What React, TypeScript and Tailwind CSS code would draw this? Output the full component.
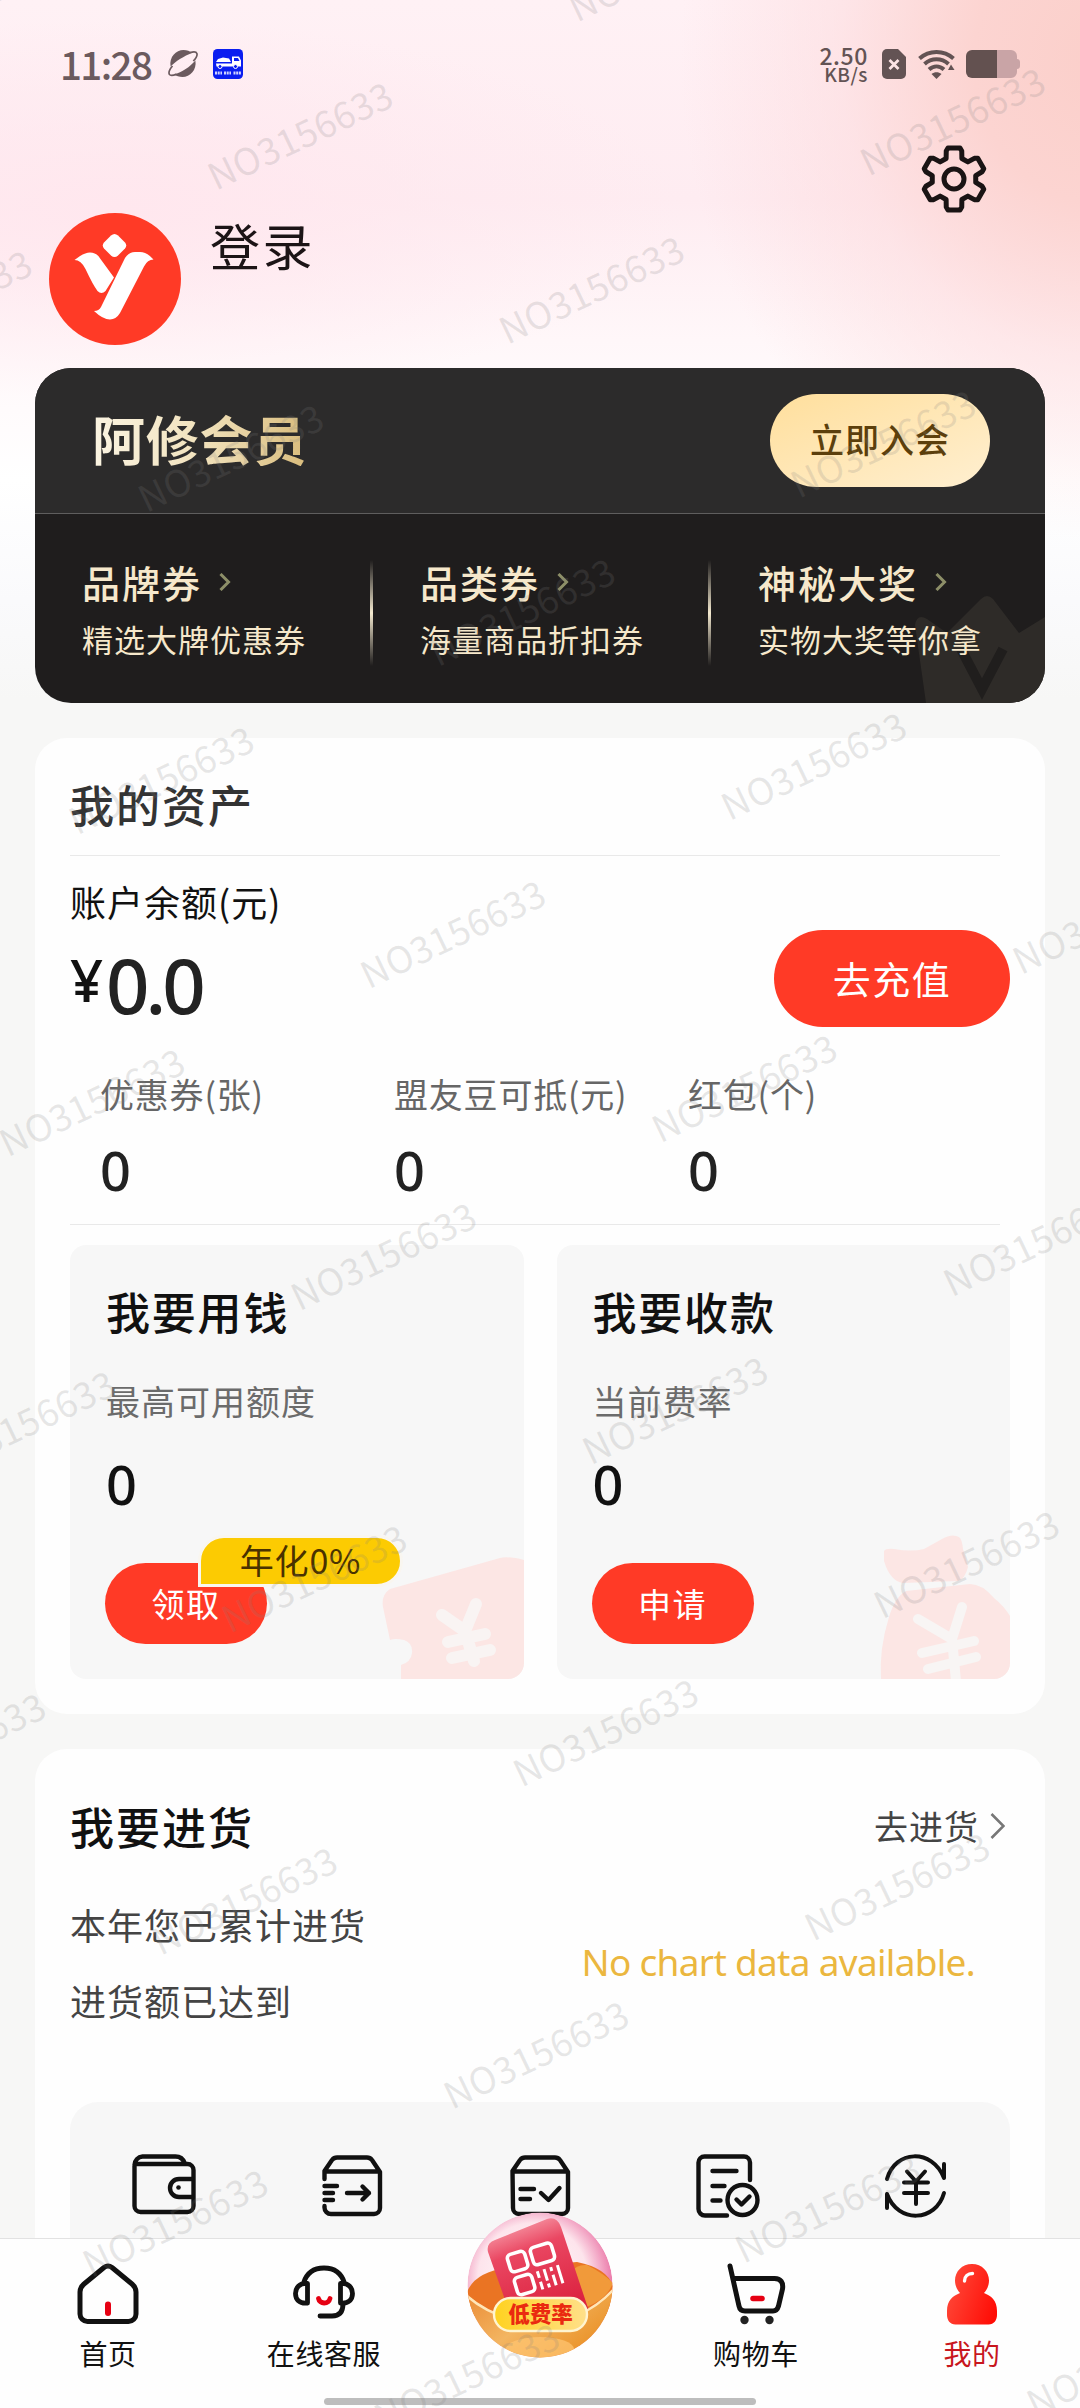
import type { ReactNode } from "react";
import { clsx } from "clsx";

const perks = [
  { title: "品牌券", desc: "精选大牌优惠券" },
  { title: "品类券", desc: "海量商品折扣券" },
  { title: "神秘大奖", desc: "实物大奖等你拿" },
];

const assets = [
  { label: "优惠券(张)", value: "0" },
  { label: "盟友豆可抵(元)", value: "0" },
  { label: "红包(个)", value: "0" },
];

/* ── Status bar ── */

function StatusBar() {
  return (
    <div className="h-[128px] px-[60px] flex items-center justify-between text-[#6b5a5e]">
      <div className="flex items-center h-[30px]">
        <span className="text-[38.5px] leading-[38px] font-medium tracking-[-1.6px] w-[108px] -mt-[3px]">11:28</span>
        <svg width="30" height="30" viewBox="0 0 30 30" fill="currentColor">
          <path d="M2.6 17.500C1 8 8 1 15.500 1c3.600 0 6.400 1.200 8.500 3C16 7 8 12 2.600 17.500z" />
          <path d="M27.400 11.500C29 21 22 28 14.500 28c-3 0-6.500-1-8.500-2.500C14 23 22 18 27.400 11.500z" />
          <path
            d="M22 3.500c3.400-1 6.400-.6 6.900.9.600 1.900-1.100 5.100-3.600 7.600M4.500 17c-3 3.500-4 7-3 8.500 1 1.200 3.500 1 7-.4"
            fill="none"
            stroke="currentColor"
            strokeWidth="1.700"
          />
        </svg>
        <svg className="ml-[15px]" width="30" height="30" viewBox="0 0 30 30">
          <rect width="30" height="30" rx="4.500" fill="#0a1ef0" />
          <path d="M3 14.500h16V7.500h7l2 4v6H3.500zM5 10l5-1.500 6 1 2 3.500H3z" fill="#fff" />
          <path d="M21 9h4l1.500 3H21z" fill="#0a1ef0" />
          <circle cx="7" cy="17.500" r="2" fill="#0a1ef0" stroke="#fff" />
          <circle cx="22.500" cy="17.500" r="2" fill="#0a1ef0" stroke="#fff" />
          <path d="M2 24h7M11 24h7M20.500 24h8" stroke="#cfd4ff" strokeWidth="3" strokeDasharray="2 .7" />
        </svg>
      </div>
      <div className="flex items-center text-[#635354]">
        <div className="text-right font-medium mr-[14px]">
          <div className="text-[23px] leading-[19px] tracking-[0.6px]">2.50</div>
          <div className="text-[19px] leading-[18px] tracking-[0.5px]">KB/s</div>
        </div>
        <svg width="24" height="30" viewBox="0 0 24 30">
          <path d="M5 0h11l8 8v17a5 5 0 0 1-5 5H5a5 5 0 0 1-5-5V5a5 5 0 0 1 5-5z" fill="currentColor" />
          <path d="m7.500 11 9 9m0-9-9 9" stroke="#fde4e6" strokeWidth="2.800" />
        </svg>
        <svg className="ml-[12px]" width="37" height="30" viewBox="0 0 37 30" fill="none" stroke="currentColor" strokeWidth="4">
          <path d="M1.500 9.500C11 .8 26 .8 35.500 9.500" />
          <path d="M6.500 15c7-6.300 17-6.300 24 0" />
          <path d="M11 20.500c4.500-4 10.500-4 15 0" />
          <path d="m13.500 25 5 5 5-5c-3-2.300-7-2.300-10 0z" fill="currentColor" stroke="none" />
          <path d="m30 21 3-5.500 3.500 5.500z" fill="currentColor" stroke="none" />
        </svg>
        <svg className="ml-[11px]" width="54" height="28" viewBox="0 0 54 28">
          <path d="M31 0h14a6 6 0 0 1 6 6v3c1.700 0 3 1 3 3v4c0 2-1.300 3-3 3v3a6 6 0 0 1-6 6H31z" fill="#c9a4a6" />
          <path d="M6 0h25v28H6a6 6 0 0 1-6-6V6a6 6 0 0 1 6-6z" fill="#635150" />
        </svg>
      </div>
    </div>
  );
}

/* Six teeth, each given by [angle offset, radius] pairs. */
const gearPoints = [0, 60, 120, 180, 240, 300]
  .flatMap((base) =>
    [
      [-21, 22],
      [-15.5, 29],
      [-11, 31.5],
      [11, 31.5],
      [15.5, 29],
      [21, 22],
    ].map(([a, r]) => {
      const rad = ((base + a) * Math.PI) / 180;
      return `${(Math.sin(rad) * r).toFixed(2)},${(-Math.cos(rad) * r).toFixed(2)}`;
    }),
  )
  .join(" ");

function GearIcon() {
  return (
    <svg width="68" height="68" viewBox="-34 -34 68 68" fill="none" stroke="#1a1414" strokeWidth="5" strokeLinejoin="round">
      <polygon points={gearPoints} />
      <circle r="10" />
    </svg>
  );
}

function Avatar() {
  return (
    <svg width="132" height="132" viewBox="0 0 132 132">
      <circle cx="66" cy="66" r="66" fill="#ff3a26" />
      <path d="M62 22.500q3.500-3 7 0l7 7q2.500 3 0 6l-7 7q-3.500 3-7 0l-7-7q-2.500-3 0-6z" fill="#fff" />
      <path d="M25.500 47q9-7.500 15.500-7.500 7 0 10.500 6.500L65 64.500 56.500 78q-4 4-8 0Q44 72 36.500 56 32 47 25.500 47z" fill="#fff" />
      <path d="M76 45q4-6 10-6h5q7 0 13.500 7.500-6 0-9.500 7L71 100q-4 6.500-10 6.500-7 0-16-8.500 5 0 7-4z" fill="#fff" />
    </svg>
  );
}

function PerkArrow() {
  return (
    <svg width="12" height="18" viewBox="0 0 12 18" fill="none" stroke="#8d8f68" strokeWidth="3">
      <path d="m1.500 1 8 8-8 8" />
    </svg>
  );
}

/* ── Membership card ── */

function MemberCard() {
  return (
    <section className="mx-[35px] mt-[23px] h-[335px] rounded-[36px] overflow-hidden bg-[#1f1d1d] relative">
      <div className="h-[146px] bg-[#2c2b2b] border-b border-[#5f5e5e] pl-[57px] pr-[55px] flex items-center justify-between">
        <h2 className="-mt-[6px] text-[53px] leading-[56px] font-bold tracking-[0.8px] bg-linear-to-r from-[#fbf4e2] via-[#f1e2bd] to-[#d9bc7c] bg-clip-text text-transparent">
          阿修会员
        </h2>
        <button className="w-[220px] h-[93px] pb-[3px] rounded-full bg-linear-to-br from-[#ffdf9c] to-[#ffefd0] text-[#5c3f0c] text-[34px] leading-[34px] font-medium tracking-[1px]">
          立即入会
        </button>
      </div>
      <svg className="absolute right-0 bottom-0" width="132" height="108" viewBox="0 0 132 108">
        <path d="M13 108 2 30q2-12 12-6l20 14 34-34q6-6 12 0l26 34 26-16v86z" fill="#2e2b28" />
        <path d="m48 54 21 40 21-40" fill="none" stroke="#201e1d" strokeWidth="10" />
      </svg>
      <div className="relative flex pt-[46px]">
        {perks.map((perk, i) => (
          <div key={perk.title} className="w-[338px] shrink-0 h-[106px] flex justify-between">
            <div className="pl-[47px] pt-[2px] text-[#f6e8cb]">
              <div className="flex items-center gap-[17px]">
                <span className="text-[38px] leading-[40px] font-medium tracking-[2px]">{perk.title}</span>
                <PerkArrow />
              </div>
              <div className="mt-[21px] text-[31px] leading-[32px] tracking-[1px] whitespace-nowrap">{perk.desc}</div>
            </div>
            {i < 2 && <div className="w-[3px] bg-linear-to-b from-transparent via-[#f3e9cf] to-transparent" />}
          </div>
        ))}
      </div>
    </section>
  );
}

/* ── Assets ── */

function PillButton({ className, children }: { className?: string; children: ReactNode }) {
  return (
    <button className={clsx("rounded-full bg-[#ff3a26] text-white flex items-center justify-center", className)}>
      {children}
    </button>
  );
}

function TicketArt() {
  return (
    <svg className="absolute right-0 bottom-0" width="142" height="124" viewBox="0 0 142 124" fill="#fce6e4">
      <path d="M8 34 118 3q8-2 24 2v119H19v-14q10-3 11-12 1-10-8-13-9-2-14 0L1 52Q-1 40 8 34z" />
      <path
        d="m60 60 23 16 11-27M83 76l9 30M66 87l37-8M70 103l38-8"
        fill="none"
        stroke="#f9f4f3"
        strokeWidth="12"
        strokeLinecap="round"
      />
    </svg>
  );
}

function MoneyBagArt() {
  return (
    <svg className="absolute right-0 bottom-0" width="132" height="144" viewBox="0 0 132 144" fill="#fce6e4">
      <path d="M6 16q2-3 10-2 18 3 30 0L64 4q10-6 17-2 3 2 4 12l5 18q-3 12-10 14l-55 2Q12 46 6 26z" />
      <path d="M28 56 92 49q12 0 24 14 10 8 16 18v63H3q-2-30 8-62Q17 62 28 56z" />
      <path
        d="m40 84 34 20 10-32M74 104l4 42M44 118l52-12M50 134l48-12"
        fill="none"
        stroke="#f8f5f4"
        strokeWidth="10"
        strokeLinecap="round"
      />
    </svg>
  );
}

function QuotaCard({
  title,
  label,
  action,
  tag,
  art,
}: {
  title: string;
  label: string;
  action: string;
  tag?: string;
  art: ReactNode;
}) {
  return (
    <div className="relative flex-1 h-[434px] rounded-[16px] overflow-hidden bg-[#f7f7f7] px-[36px] pt-[44px]">
      {art}
      <h3 className="text-[44px] leading-[44px] font-medium tracking-[1.800px] text-[#111]">{title}</h3>
      <div className="mt-[51px] text-[34px] leading-[34px] tracking-[1px] text-[#6b6b6b]">{label}</div>
      <div className="mt-[39px] font-['Noto_Sans'] text-[54px] leading-[54px] font-medium text-[#111]">{"0"}</div>
      <div className="relative mt-[52px] -ml-px w-[162px]">
        <PillButton className="w-[162px] h-[81px] text-[33px] leading-[33px] tracking-[1.500px]">{action}</PillButton>
        {tag && (
          <span className="absolute left-[93px] -top-[28px] w-[205px] h-[52px] border-[3px] border-[#f9f6f0] rounded-[26px] rounded-bl-none bg-[#fccb02] text-[#4a3200] text-[34px] leading-[44px] text-center whitespace-nowrap tracking-[0.8px]">
            {tag}
          </span>
        )}
      </div>
    </div>
  );
}

function AssetsCard() {
  return (
    <section className="mx-[35px] mt-[35px] rounded-[32px] bg-[#fefefe] px-[35px] pb-[35px]">
      <div className="h-[118px] pt-[14px] mr-[10px] border-b border-[#e9e9e9] flex items-center">
        <h2 className="text-[44px] leading-[44px] font-medium tracking-[2px] text-[#333]">我的资产</h2>
      </div>
      <div className="mt-[27px] text-[36px] leading-[36px] tracking-[1px] text-[#111]">账户余额(元)</div>
      <div className="mt-[11px] h-[97px] flex justify-between">
        <div className="flex items-start font-medium font-['Noto_Sans']">
          <span className="mt-[21px] w-[36px] text-[58px] leading-[58px] text-[#111]">¥</span>
          <span className="mt-[17px] text-[76px] leading-[75px] tracking-[-4px] text-[#222]">0.0</span>
        </div>
        <PillButton className="w-[236px] h-[97px] pb-[2px] text-[38px] leading-[38px] tracking-[1.500px]">去充值</PillButton>
      </div>
      <div className="mt-[50px] pl-[30px] mr-[10px] h-[148px] flex border-b border-[#e9e9e9]">
        {assets.map((a) => (
          <div key={a.label} className="w-[294px] shrink-0 whitespace-nowrap">
            <div className="text-[34px] leading-[34px] tracking-[0.8px] text-[#666]">{a.label}</div>
            <div className="mt-[32px] font-['Noto_Sans'] text-[54px] leading-[54px] font-medium text-[#222]">{a.value}</div>
          </div>
        ))}
      </div>
      <div className="mt-[20px] flex gap-[33px]">
        <QuotaCard title="我要用钱" label="最高可用额度" action="领取" tag="年化0%" art={<TicketArt />} />
        <QuotaCard title="我要收款" label="当前费率" action="申请" art={<MoneyBagArt />} />
      </div>
    </section>
  );
}

/* ── Restock ── */

const stroke = {
  fill: "none",
  stroke: "#111",
  strokeWidth: 4.4,
  strokeLinecap: "round",
  strokeLinejoin: "round",
} as const;

function WalletIcon() {
  return (
    <svg width="64" height="64" viewBox="0 0 64 64" {...stroke}>
      <path d="M2.500 12v40a6 6 0 0 0 6 6h47a6 6 0 0 0 6-6V16a6 6 0 0 0-6-6H3M2.500 11a8.500 8.500 0 0 1 8-8.500h33c5 0 8 3 9.500 7" />
      <path d="M60 25H47a9 9 0 0 0 0 18h13" />
      <circle cx="46.500" cy="33.500" r="2.300" fill="#111" stroke="none" />
    </svg>
  );
}

function BoxOutIcon() {
  return (
    <svg width="64" height="64" viewBox="0 0 64 64" {...stroke}>
      <path d="M4.500 25v-8L12 6q2-2.500 5-2.500h30q3 0 5 2.500l8 12v36a6 6 0 0 1-6 6H11a6.500 6.500 0 0 1-6.500-6.500V52M5 17.500h54" />
      <path d="M4.500 32H17M4.500 39H13M4.500 46H13M27 39h22M42.500 32.500 49 39l-6.500 6.500" />
    </svg>
  );
}

function BoxCheckIcon() {
  return (
    <svg width="64" height="64" viewBox="0 0 64 64" {...stroke}>
      <path d="M4.500 17 12 6q2-2.500 5-2.500h30q3 0 5 2.500l8 12v36a6 6 0 0 1-6 6H11a6 6 0 0 1-6-6zM5 17.500h54" />
      <path d="M12.500 35H26M12.500 45H22M33 39l7.500 7L51.500 34" />
    </svg>
  );
}

function OrderCheckIcon() {
  return (
    <svg width="64" height="64" viewBox="0 0 64 64" {...stroke}>
      <path d="M54 26V8.500a6 6 0 0 0-6-6H8.500a6 6 0 0 0-6 6V55a6.500 6.500 0 0 0 6.500 6.500h22" />
      <path d="M16.500 17h24M16.500 32h12M16.500 46.500h8" />
      <circle cx="46.500" cy="46" r="15" />
      <path d="m40.500 45.500 5 5 8-8" />
    </svg>
  );
}

function YenCycleIcon() {
  return (
    <svg width="64" height="64" viewBox="0 0 64 64" {...stroke} strokeWidth="4">
      <path d="M3 25C11-4 48-6 60 24V10M60 39C52 68 14 70 3 40v14" />
      <path d="m23 17.500 9 10 9-10M20 28.500h24M20 39h24M32 28v22" />
    </svg>
  );
}

function RestockCard() {
  const tools = [WalletIcon, BoxOutIcon, BoxCheckIcon, OrderCheckIcon, YenCycleIcon];
  return (
    <section className="mx-[35px] mt-[35px] rounded-t-[32px] bg-[#fefefe] px-[35px] pt-[55px]">
      <div className="flex items-center justify-between">
        <h2 className="text-[44px] leading-[44px] font-medium tracking-[2px] text-[#111]">我要进货</h2>
        <div className="flex items-center gap-[11px] pr-[5px] text-[#444]">
          <span className="text-[34px] leading-[34px] tracking-[1px]">去进货</span>
          <svg width="15" height="26" viewBox="0 0 15 26" fill="none" stroke="#777" strokeWidth="2.600">
            <path d="m1.500 1 12 12-12 12" />
          </svg>
        </div>
      </div>
      <div className="mt-[58px] flex justify-between text-[#444]">
        <div className="text-[36px] leading-[36px] tracking-[1px]">
          <div>本年您已累计进货</div>
          <div className="mt-[40px]">进货额已达到</div>
        </div>
        <div className="mt-[37px] mr-[35px] font-['Noto_Sans'] text-[37px] leading-[38px] tracking-[-0.7px] text-[#ebb73f]">
          No chart data available.
        </div>
      </div>
      <div className="mt-[84px] h-[200px] rounded-t-[28px] bg-[#f7f7f7] pt-[52px] flex">
        {tools.map((Icon, i) => (
          <div key={i} className="flex-1 flex justify-center">
            <Icon />
          </div>
        ))}
      </div>
    </section>
  );
}

/* ── Tab bar ── */

function HomeIcon() {
  return (
    <svg width="62" height="62" viewBox="0 0 62 62" {...stroke} strokeWidth="5">
      <path d="M27 4.500q4-3 8 0L55 21q4 3.500 4 8v22a7.500 7.500 0 0 1-7.500 7.500h-41A7.500 7.500 0 0 1 3 51V29q0-4.500 4-8z" />
      <path d="M31 41.500V50" stroke="#e60012" strokeWidth="6" />
    </svg>
  );
}

function ServiceIcon() {
  return (
    <svg width="62" height="62" viewBox="0 0 62 62" {...stroke} strokeWidth="4.800">
      <path d="M10.500 20C14 9 22 5 31 5s17 4 20.500 15M14.500 20.500v19.500C6 41 2.500 36 2.500 30.500S6 20 14.500 20.500zM47.500 20.500v19.500C56 41 59.500 36 59.500 30.500S56 20 47.500 20.500zM50 41c0 8-4 12-11 12H27" />
      <path d="M25.500 35.500c1 6 10 6 11.500 0" stroke="#e60012" />
    </svg>
  );
}

function CartIcon() {
  return (
    <svg width="62" height="62" viewBox="0 0 62 62" {...stroke} strokeWidth="5">
      <path d="M5 3 14 43q1 5 6 5h28q4 0 5.500-5l4-17q1.500-10-8-10.500H8.500" />
      <path d="M28 35.500h9" stroke="#e60012" strokeWidth="5.500" />
      <circle cx="19.500" cy="57" r="4.200" fill="#222" stroke="none" />
      <circle cx="44.500" cy="57" r="4.200" fill="#222" stroke="none" />
    </svg>
  );
}

function MineIcon() {
  return (
    <svg width="62" height="62" viewBox="0 0 62 62">
      <defs>
        <linearGradient id="mine" x1="0" y1=".3" x2="1" y2=".7">
          <stop offset="0" stopColor="#ff4a3a" />
          <stop offset="1" stopColor="#ff0d06" />
        </linearGradient>
      </defs>
      <path
        d="M31 1c10 0 17 7.500 17 16.500 0 5-2 9-5 12.500 7 3 13 7 13 18v4c0 5-3 9.500-8.500 9.500h-33C9 61.500 6 57 6 52v-4c0-11 6-15 13-18-3-3.500-5-7.500-5-12.500C14 8.500 21 1 31 1z"
        fill="url(#mine)"
      />
      <path d="M23.500 18c0-4.500 3.500-7.500 8-7.500" fill="none" stroke="#fff" strokeWidth="3.400" strokeLinecap="round" />
    </svg>
  );
}

/* Floating glass ball with the payment card in it. */
function PayBall() {
  return (
    <div className="absolute left-1/2 -top-[27px] -ml-[73px] w-[146px] h-[146px]">
      <svg width="146" height="146" viewBox="0 0 146 146">
        <defs>
          <radialGradient id="glass" cx=".45" cy=".45" r=".58">
            <stop offset="0" stopColor="#fff" />
            <stop offset=".65" stopColor="#fde4ec" />
            <stop offset="1" stopColor="#e8689e" />
          </radialGradient>
          <linearGradient id="payCard" x1=".2" y1="0" x2=".6" y2="1">
            <stop offset="0" stopColor="#f9a9b4" />
            <stop offset=".35" stopColor="#ea4762" />
            <stop offset="1" stopColor="#dc2340" />
          </linearGradient>
          <linearGradient id="bowl" x1="0" y1="0" x2="1" y2=".6">
            <stop offset="0" stopColor="#ea8a34" />
            <stop offset=".5" stopColor="#f3b561" />
            <stop offset="1" stopColor="#ea9228" />
          </linearGradient>
          <linearGradient id="pill" x1="0" y1="0" x2="1" y2="0">
            <stop offset="0" stopColor="#ffd21f" />
            <stop offset="1" stopColor="#ffe08a" />
          </linearGradient>
          <clipPath id="ball">
            <circle cx="73" cy="73" r="72.500" />
          </clipPath>
        </defs>
        <g clipPath="url(#ball)">
          <circle cx="73" cy="73" r="72.500" fill="url(#glass)" />
          <path d="M0 80Q8 60 40 56l70-6q30 6 36 24v30H0z" fill="#ea7423" />
          <path d="M104 60q6-8 16-7 16 8 26 18-8 20-34 26z" fill="#f19a3a" />
          <path d="M21 40q-2-9 7-12L80 7q10-3 14 8l28 84H42z" fill="url(#payCard)" />
          <path d="M0 84q30 26 73 26t73-32v68H0z" fill="url(#bowl)" />
          <path d="M0 84q30 26 73 26t73-32" fill="none" stroke="#ffe6b8" strokeWidth="2.500" />
          <ellipse cx="73" cy="137" rx="34" ry="12" fill="#ffc673" opacity=".7" />
        </g>
        <g fill="none" stroke="#fff" strokeWidth="3.600" transform="rotate(-17 68 62)">
          <rect x="46" y="36" width="18" height="18" rx="4" />
          <rect x="70" y="36" width="22" height="18" rx="4" />
          <rect x="46" y="60" width="18" height="18" rx="4" />
          <path d="M71 60v7m0 4v8M78 60v12m0 3v4M85 60v4m0 4v11M92 60v19" strokeWidth="3" />
        </g>
        <rect x="27" y="86" width="93" height="33" rx="16.500" fill="url(#pill)" stroke="#fff4d0" strokeWidth="2.400" />
      </svg>
      <span className="absolute left-0 top-[90px] w-[147px] text-center text-[21.500px] leading-[22px] font-black text-[#ea2a10]">
        低费率
      </span>
    </div>
  );
}

function TabItem({ icon, label, active }: { icon?: ReactNode; label?: string; active?: boolean }) {
  return (
    <div className="flex-1 flex flex-col items-center">
      {icon}
      {label && (
        <span className={clsx("mt-[14px] text-[28px] leading-[28px] tracking-[0.6px]", active ? "text-[#c8161d]" : "text-[#111]")}>
          {label}
        </span>
      )}
    </div>
  );
}

function TabBar() {
  return (
    <nav className="relative h-[170px] shrink-0 bg-[#fefefe] border-t border-[#e2e2e2] flex flex-col">
      <div className="flex pt-[24px]">
        <TabItem icon={<HomeIcon />} label="首页" />
        <TabItem icon={<ServiceIcon />} label="在线客服" />
        <TabItem />
        <TabItem icon={<CartIcon />} label="购物车" />
        <TabItem icon={<MineIcon />} label="我的" active />
      </div>
      <PayBall />
      <div className="mt-auto mb-[3px] mx-auto w-[432px] h-[7px] rounded-full bg-[#bdbdbd]" />
    </nav>
  );
}

/* ── Watermark ── slanted lattice repeated over the whole screen. */

const marks = Array.from({ length: 9 }, (_, j) => j - 1).flatMap((j) =>
  Array.from({ length: 9 }, (_, i) => i - 3)
    .map((i) => ({ x: 220 + 291.5 * i - 69.4 * j, y: 190 + 154 * i + 322.2 * j }))
    .filter(({ x, y }) => x > -190 && x < 1090 && y > -10 && y < 2490),
);

function Watermark() {
  return (
    <svg className="absolute inset-0 pointer-events-none" width="1080" height="2408" aria-hidden>
      {marks.map(({ x, y }) => (
        <text
          key={`${x},${y}`}
          transform={`translate(${x - 4} ${y + 1}) rotate(-25.500)`}
          fontSize="37"
          letterSpacing=".2"
          fill="#808080"
          fillOpacity=".19"
        >
          NO3156633
        </text>
      ))}
    </svg>
  );
}

export default function App() {
  return (
    <div className="relative w-[1080px] h-[2408px] overflow-hidden flex flex-col bg-[#f7f7f6] font-['Noto_Sans_CJK_SC',sans-serif]">
      <main className="flex-1 min-h-0 overflow-hidden bg-no-repeat bg-[radial-gradient(ellipse_420px_480px_at_1100px_60px,#fbcfca_0%,#fcd4d1_30%,#fddadc88_62%,#fde6ea00_100%),radial-gradient(ellipse_560px_190px_at_120px_210px,#ffe7ee_0%,#ffe7ee00_100%),linear-gradient(180deg,#fff1f5_0px,#feecf1_200px,#fff7f9_340px,#ffffff_480px,#fafafc_600px,#f7f7f6_700px)]">
        <StatusBar />
        <div className="h-[85px] pr-[92px] flex items-end justify-end">
          <GearIcon />
        </div>
        <div className="flex h-[132px] pl-[49px] gap-[29px]">
          <Avatar />
          <span className="mt-[6px] text-[50px] leading-[50px] tracking-[2.500px] text-[#1c1416]">登录</span>
        </div>
        <MemberCard />
        <AssetsCard />
        <RestockCard />
      </main>
      <TabBar />
      <Watermark />
    </div>
  );
}
